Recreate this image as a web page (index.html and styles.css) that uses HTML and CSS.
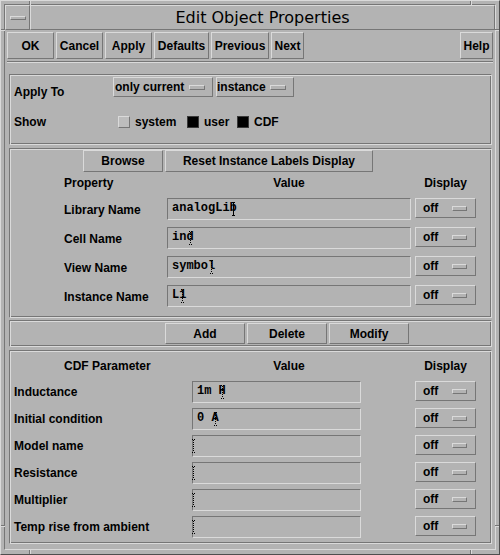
FILE: index.html
```html
<!DOCTYPE html>
<html>
<head>
<meta charset="utf-8">
<title>Edit Object Properties</title>
<link rel="stylesheet" href="styles.css">
</head>
<body>
<div class="window">
  <span class="mark v m-tl"></span>
  <span class="mark v m-tr"></span>
  <span class="mark v m-bl"></span>
  <span class="mark v m-br"></span>
  <span class="mark h m-lt"></span>
  <span class="mark h m-lb"></span>
  <span class="mark h m-rt"></span>
  <span class="mark h m-rb"></span>
  <div class="inset">
    <div class="titlebar">
      <div class="menubtn"><span class="menubar"></span></div>
      <div class="title">Edit Object Properties</div>
    </div>
    <div class="client">
      <div class="actions">
        <button class="btn b-ok">OK</button>
        <button class="btn b-cancel">Cancel</button>
        <button class="btn b-apply">Apply</button>
        <button class="btn b-defaults">Defaults</button>
        <button class="btn b-previous">Previous</button>
        <button class="btn b-next">Next</button>
        <button class="btn b-help">Help</button>
      </div>
      <div class="sep"></div>

      <div class="panel p-apply">
        <div class="arow">
          <div class="alabel">Apply To</div>
          <div class="opt o-cur"><span>only current</span><span class="ind"></span></div>
          <div class="opt o-inst"><span>instance</span><span class="ind"></span></div>
        </div>
        <div class="srow">
          <div class="slabel">Show</div>
          <div class="tog"><span class="box"></span><span class="tl t-sys">system</span></div>
          <div class="tog"><span class="box on"></span><span class="tl t-user">user</span></div>
          <div class="tog"><span class="box on"></span><span class="tl">CDF</span></div>
        </div>
      </div>

      <div class="panel p-props">
        <div class="tools">
          <button class="btn b-browse">Browse</button>
          <button class="btn b-reset">Reset Instance Labels Display</button>
        </div>
        <div class="head">
          <span class="h-prop">Property</span>
          <span class="h-val">Value</span>
          <span class="h-disp">Display</span>
        </div>
        <div class="prow first">
          <span class="plabel">Library Name</span>
          <div class="field pfield">analogLib<span class="caret"></span></div>
          <div class="opt disp"><span>off</span><span class="ind i-off"></span></div>
        </div>
        <div class="prow">
          <span class="plabel">Cell Name</span>
          <div class="field pfield">ind<span class="caret dot"></span></div>
          <div class="opt disp"><span>off</span><span class="ind i-off"></span></div>
        </div>
        <div class="prow">
          <span class="plabel">View Name</span>
          <div class="field pfield">symbol<span class="caret dot"></span></div>
          <div class="opt disp"><span>off</span><span class="ind i-off"></span></div>
        </div>
        <div class="prow">
          <span class="plabel">Instance Name</span>
          <div class="field pfield">L1<span class="caret dot"></span></div>
          <div class="opt disp"><span>off</span><span class="ind i-off"></span></div>
        </div>
      </div>

      <div class="panel p-add">
        <button class="btn b-edit">Add</button>
        <button class="btn b-edit">Delete</button>
        <button class="btn b-edit">Modify</button>
      </div>

      <div class="panel p-cdf">
        <div class="head chead">
          <span class="h-prop">CDF Parameter</span>
          <span class="h-val">Value</span>
          <span class="h-disp">Display</span>
        </div>
        <div class="crow first">
          <span class="clabel">Inductance</span>
          <div class="field cfield">1m H<span class="caret dot"></span></div>
          <div class="opt disp cdisp"><span>off</span><span class="ind i-off"></span></div>
        </div>
        <div class="crow">
          <span class="clabel">Initial condition</span>
          <div class="field cfield">0 A<span class="caret dot"></span></div>
          <div class="opt disp cdisp"><span>off</span><span class="ind i-off"></span></div>
        </div>
        <div class="crow">
          <span class="clabel">Model name</span>
          <div class="field cfield"><span class="caret dot"></span></div>
          <div class="opt disp cdisp"><span>off</span><span class="ind i-off"></span></div>
        </div>
        <div class="crow">
          <span class="clabel">Resistance</span>
          <div class="field cfield"><span class="caret dot"></span></div>
          <div class="opt disp cdisp"><span>off</span><span class="ind i-off"></span></div>
        </div>
        <div class="crow">
          <span class="clabel">Multiplier</span>
          <div class="field cfield"><span class="caret dot"></span></div>
          <div class="opt disp cdisp"><span>off</span><span class="ind i-off"></span></div>
        </div>
        <div class="crow">
          <span class="clabel">Temp rise from ambient</span>
          <div class="field cfield"><span class="caret dot"></span></div>
          <div class="opt disp cdisp"><span>off</span><span class="ind i-off"></span></div>
        </div>
      </div>
    </div>
  </div>
</div>
</body>
</html>
```

FILE: styles.css
```css
:root {
  --bg: #b3b3b3;
  --lt: #dadada;
  --dk: #767676;
  --xdk: #4e4e4e;
}
* { box-sizing: border-box; }
html, body { margin: 0; padding: 0; background: var(--bg); }
body {
  font-family: "Liberation Sans", Arial, sans-serif;
  font-weight: bold;
  font-size: 12px;
  color: #000;
}
.window {
  position: relative;
  width: 500px;
  height: 555px;
  overflow: hidden;
  background: var(--bg);
  border: 1px solid;
  border-color: var(--lt) var(--xdk) var(--xdk) var(--lt);
  padding: 3px 3px 4px 3px;
}
.mark { position: absolute; }
.mark.v { width: 2px; height: 5px; border-left: 1px solid var(--dk); border-right: 1px solid var(--lt); }
.mark.h { width: 5px; height: 2px; border-top: 1px solid var(--dk); border-bottom: 1px solid var(--lt); }
.m-tl { left: 28px; top: -1px; }
.m-tr { left: 469px; top: -1px; }
.m-bl { left: 28px; bottom: -1px; }
.m-br { left: 469px; bottom: -1px; }
.m-lt { left: -1px; top: 28px; }
.m-lb { left: -1px; top: 524px; }
.m-rt { right: -1px; top: 28px; }
.m-rb { right: -1px; top: 524px; }

.inset {
  height: 100%;
  border: 1px solid;
  border-color: var(--dk) var(--lt) var(--lt) var(--dk);
  display: flex;
  flex-direction: column;
}
.titlebar { flex: none; height: 25px; display: flex; }
.menubtn {
  width: 25px;
  border: 1px solid;
  border-color: var(--lt) var(--dk) var(--dk) var(--lt);
  display: flex;
  align-items: center;
  justify-content: center;
}
.menubar {
  width: 16px;
  height: 4px;
  border: 1px solid;
  border-color: var(--lt) var(--dk) var(--dk) var(--lt);
}
.title {
  flex: 1;
  border: 1px solid;
  border-color: var(--lt) var(--dk) var(--dk) var(--lt);
  font-family: "DejaVu Sans", sans-serif;
  font-weight: normal;
  font-size: 16px;
  line-height: 23px;
  text-align: center;
  white-space: nowrap;
}
.client {
  flex: 1;
  min-height: 0;
  display: flex;
  flex-direction: column;
  padding: 2px 2px 0 2px;
}
.btn {
  font: inherit;
  color: #000;
  background: var(--bg);
  border: 1px solid;
  border-color: var(--lt) var(--dk) var(--dk) var(--lt);
  border-radius: 0;
  margin: 0;
  padding: 0;
  text-align: center;
  white-space: nowrap;
}
.actions { flex: none; display: flex; gap: 2px; height: 27px; }
.actions .btn { height: 27px; }
.b-ok, .b-cancel, .b-apply { width: 47px; }
.b-defaults { width: 55px; }
.b-previous { width: 58px; }
.b-next { width: 33px; }
.b-help { width: 33px; margin-left: auto; }

.sep {
  flex: none;
  height: 2px;
  margin-top: 2px;
  border-top: 1px solid var(--dk);
  border-bottom: 1px solid var(--lt);
}
.panel {
  flex: none;
  margin: 0 1px 0 2px;
  border: 1px solid;
  border-color: var(--dk) var(--lt) var(--lt) var(--dk);
  box-shadow: inset 1px 1px 0 var(--lt), inset -1px -1px 0 var(--dk);
}

/* Apply To panel */
.p-apply { margin-top: 11px; height: 71px; padding: 2px 0 0 4px; }
.arow { display: flex; align-items: flex-start; }
.alabel { width: 99px; line-height: 14px; margin-top: 8px; }
.opt {
  display: flex;
  align-items: center;
  justify-content: space-between;
  height: 20px;
  line-height: 14px;
  border: 1px solid;
  border-color: var(--lt) var(--dk) var(--dk) var(--lt);
  white-space: nowrap;
}
.o-cur { width: 100px; padding: 0 7px 0 1px; }
.o-inst { width: 78px; margin-left: 3px; padding: 0 7px 0 0; }
.ind {
  width: 16px;
  height: 5px;
  border: 1px solid;
  border-color: var(--lt) var(--dk) var(--dk) var(--lt);
}
.ind.i-off { width: 15px; }
.srow { display: flex; align-items: center; height: 12px; margin-top: 17px; line-height: 14px; }
.slabel { width: 104px; }
.tog { display: flex; align-items: center; }
.tog + .tog { margin-left: 8px; }
.box {
  width: 12px;
  height: 12px;
  margin-right: 5px;
  background: #bdbdbd;
  border: 1px solid;
  border-color: var(--lt) var(--dk) var(--dk) var(--lt);
}
.box.on { background: #000; border-color: #3a3a3a; }
.tl { display: inline-block; }
.t-sys { width: 44px; }
.t-user { width: 25px; }

/* Property panel */
.p-props { margin-top: 3px; height: 170px; padding-top: 1px; }
.tools { display: flex; gap: 2px; margin-left: 73px; }
.b-browse { width: 80px; height: 22px; }
.b-reset { width: 208px; height: 22px; }
.head { display: flex; line-height: 14px; margin-top: 4px; padding-left: 54px; white-space: nowrap; }
.h-prop { width: 103px; }
.h-val { width: 244px; text-align: center; }
.h-disp { width: 61px; margin-left: 4px; text-align: center; }
.prow { display: flex; align-items: flex-start; height: 22px; margin-top: 7px; padding-left: 54px; }
.prow.first { margin-top: 8px; }
.plabel { width: 103px; line-height: 22px; padding-top: 1px; white-space: nowrap; }
.field {
  height: 22px;
  border: 1px solid;
  border-color: var(--dk) var(--lt) var(--lt) var(--dk);
  font-family: "Liberation Mono", "DejaVu Sans Mono", monospace;
  font-weight: bold;
  font-size: 12px;
  line-height: 14px;
  padding: 2px 4px;
  white-space: nowrap;
}
.pfield { width: 244px; }
.disp { width: 61px; margin-left: 4px; padding: 0 8px 0 7px; }
.caret {
  display: inline-block;
  width: 3px;
  height: 14px;
  margin-left: -5px;
  vertical-align: top;
  margin-top: 1px;
  border-top: 1px solid #000;
  border-bottom: 1px solid #000;
  background: linear-gradient(#000, #000) 1px 0 / 1px 100% no-repeat;
}
.caret.dot {
  border-top: 1px dotted #000;
  border-bottom: 1px dotted #000;
  background: repeating-linear-gradient(to bottom, #000 0 1px, transparent 1px 2px) 1px 0 / 1px 100% no-repeat;
}

/* Add / Delete / Modify */
.p-add { margin-top: 2px; height: 27px; padding: 2px 0 0 155px; display: flex; gap: 2px; }
.b-edit { width: 80px; height: 21px; }

/* CDF panel */
.p-cdf { margin-top: 3px; height: 194px; padding: 8px 0 0 4px; }
.chead { margin-top: 0; padding-left: 50px; }
.crow { display: flex; align-items: flex-start; height: 22px; margin-top: 5px; }
.crow.first { margin-top: 8px; }
.clabel { width: 178px; line-height: 22px; white-space: nowrap; }
.cfield { width: 169px; }
.cdisp { margin-left: 54px; }
```
